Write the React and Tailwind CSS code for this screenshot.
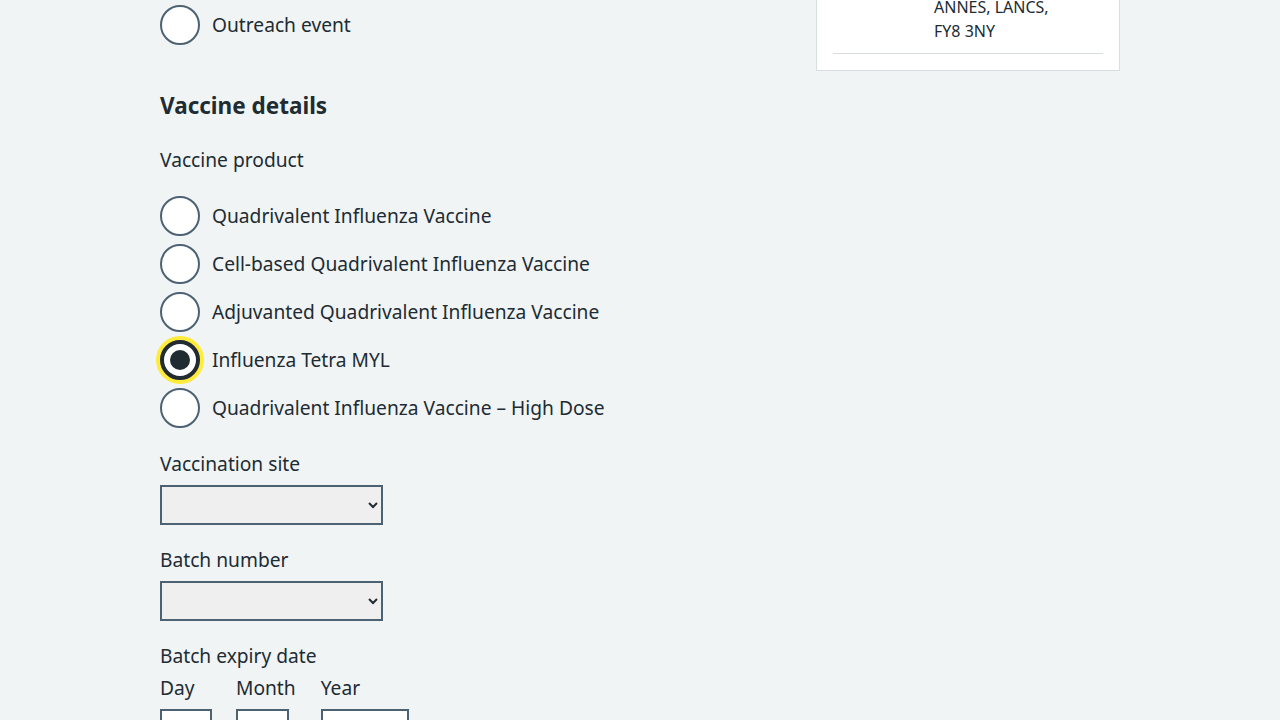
import React from "react";

const font = { fontFamily: '"Noto Sans", Arial, sans-serif' };

function Radio({ label, checked }) {
  return (
    <div className="flex items-center h-10 mb-2">
      {checked ? (
        <span className="w-10 h-10 rounded-full border-4 border-[#212b32] bg-white shadow-[0_0_0_4px_#ffeb3b] flex items-center justify-center shrink-0">
          <span className="w-5 h-5 rounded-full bg-[#212b32]" />
        </span>
      ) : (
        <span className="w-10 h-10 rounded-full border-2 border-[#4c6272] bg-white shrink-0" />
      )}
      <span className="ml-3 text-[19.2px] leading-7 text-[#212b32]">{label}</span>
    </div>
  );
}

export default function App() {
  return (
    <div className="min-h-[720px] bg-[#f0f4f5] text-[#212b32] overflow-hidden" style={font}>
      <div className="w-[960px] mx-auto flex gap-8">
        <div className="flex-1">
          <div className="mt-[5px]">
            <Radio label="Outreach event" />
          </div>
          <h2 className="mt-[45px] text-[22.5px] leading-8 font-bold">Vaccine details</h2>
          <div className="mt-6 text-[19.2px] leading-7">Vaccine product</div>
          <div className="mt-[22px]">
            <Radio label="Quadrivalent Influenza Vaccine" />
            <Radio label="Cell-based Quadrivalent Influenza Vaccine" />
            <Radio label="Adjuvanted Quadrivalent Influenza Vaccine" />
            <Radio label="Influenza Tetra MYL" checked />
            <Radio label="Quadrivalent Influenza Vaccine – High Dose" />
          </div>
          <div className="mt-[22px] text-[19.2px] leading-7">Vaccination site</div>
          <select className="mt-[7px] w-[223px] h-10 border-2 border-[#4c6272] bg-[#efefef] block"></select>
          <div className="mt-[21px] text-[19.2px] leading-7">Batch number</div>
          <select className="mt-[7px] w-[223px] h-10 border-2 border-[#4c6272] bg-[#efefef] block"></select>
          <div className="mt-[21px] text-[19.2px] leading-7">Batch expiry date</div>
          <div className="flex gap-6">
            <div>
              <div className="mt-1 text-[19.2px] leading-7">Day</div>
              <div className="mt-[7px] w-[52px] h-10 border-2 border-[#4c6272] bg-white" />
            </div>
            <div>
              <div className="mt-1 text-[19.2px] leading-7">Month</div>
              <div className="mt-[7px] w-[53px] h-10 border-2 border-[#4c6272] bg-white" />
            </div>
            <div className="ml-px">
              <div className="mt-1 text-[19.2px] leading-7">Year</div>
              <div className="mt-[7px] w-[88px] h-10 border-2 border-[#4c6272] bg-white" />
            </div>
          </div>
        </div>
        <div className="w-[304px] shrink-0">
          <div className="-mt-[30px] bg-white border border-[#d8dde0] px-4 pb-4">
            <div className="flex pb-[10px] border-b border-[#d8dde0]">
              <div className="w-[101px]" />
              <div className="text-[16px] leading-6">
                <div>LYTHAM ST</div>
                <div>ANNES, LANCS,</div>
                <div>FY8 3NY</div>
              </div>
            </div>
          </div>
        </div>
      </div>
    </div>
  );
}
